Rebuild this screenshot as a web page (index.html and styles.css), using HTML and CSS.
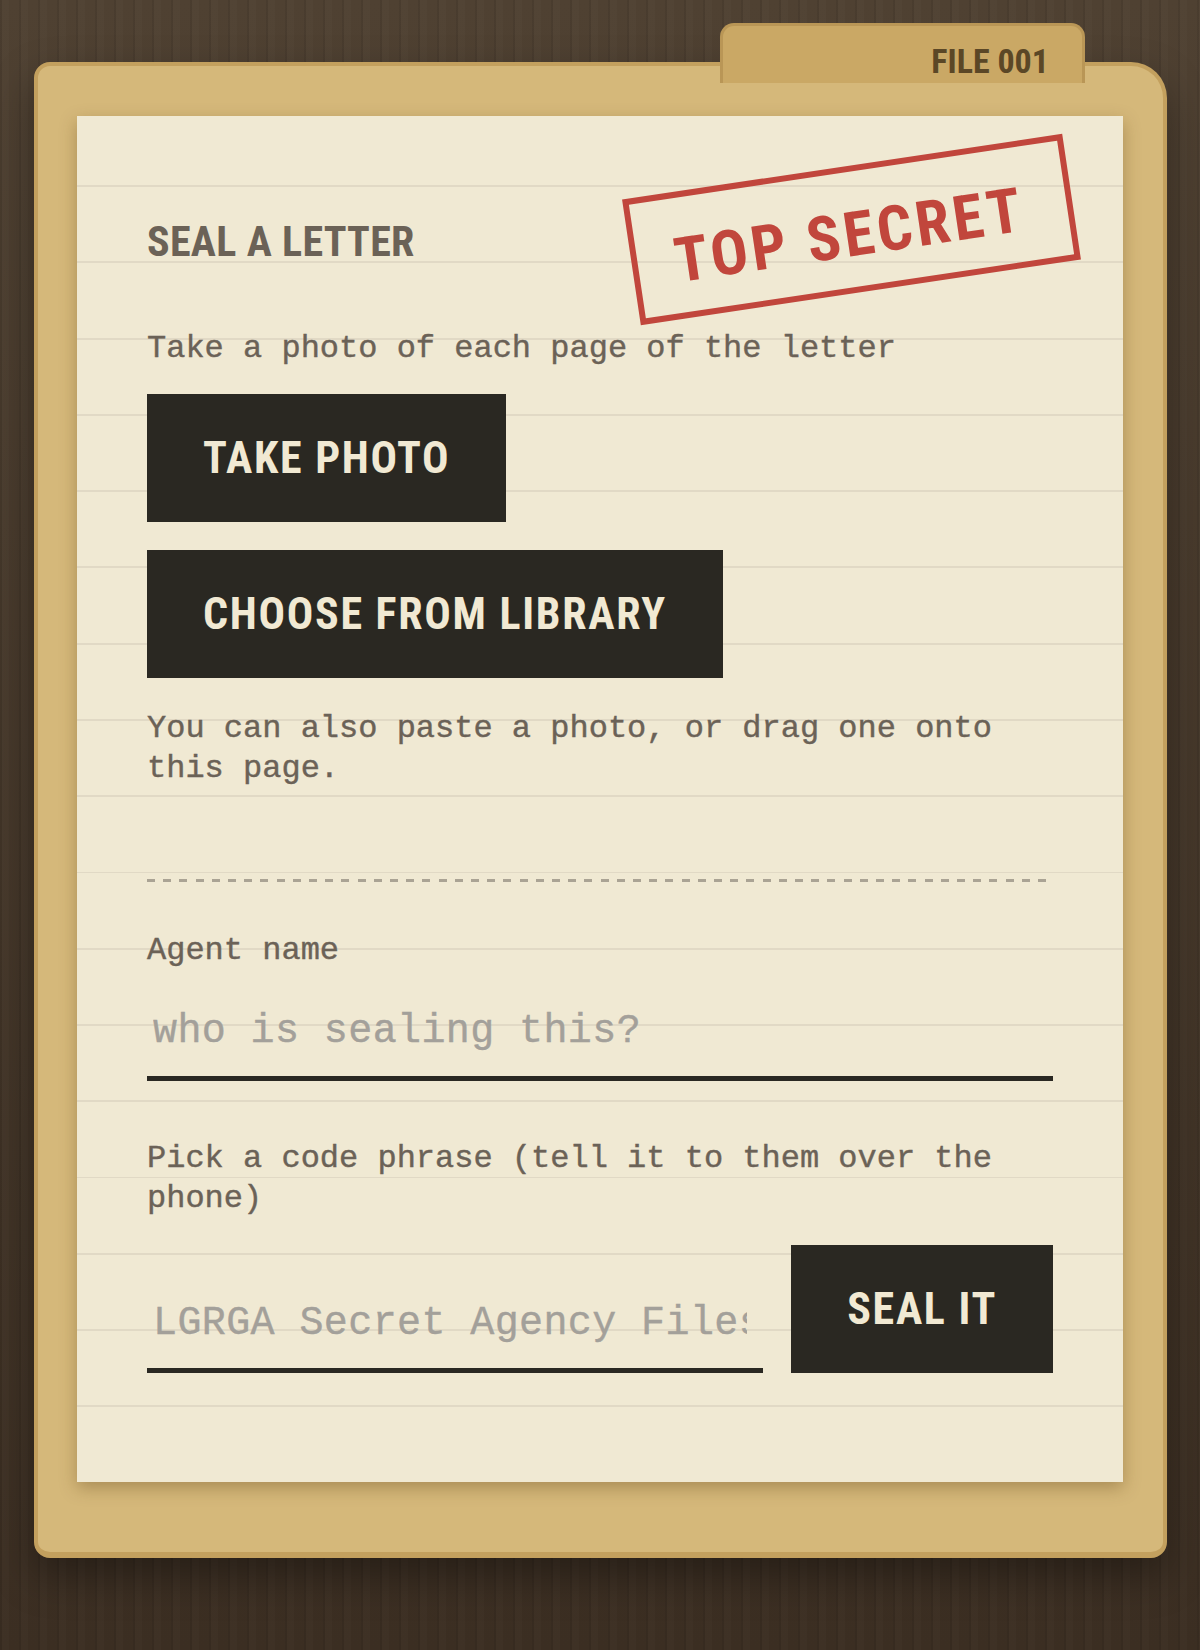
FILE: index.html
```html
<!DOCTYPE html>
<html lang="en">
<head>
    <meta charset="UTF-8">
    <meta name="viewport" content="width=device-width, initial-scale=1.0">
    <title>Seal a Letter</title>
    <link rel="stylesheet" href="styles.css">
</head>
<body>
    <div class="desk">
        <div class="folder">
            <div class="folder-tab">FILE 001</div>

            <main class="paper">
                <div class="stamp">TOP SECRET</div>

                <h1 class="paper-title">SEAL A LETTER</h1>
                <p class="note">Take a photo of each page of the letter</p>

                <div class="upload-actions">
                    <button class="btn" type="button">TAKE PHOTO</button>
                    <button class="btn" type="button">CHOOSE FROM LIBRARY</button>
                </div>

                <p class="note note-paste">You can also paste a photo, or drag one onto this page.</p>

                <hr class="divider">

                <label class="field-label" for="agent">Agent name</label>
                <input class="field" id="agent" type="text" placeholder="who is sealing this?">

                <label class="field-label field-label-phrase" for="phrase">Pick a code phrase (tell it to them over the phone)</label>
                <div class="seal-row">
                    <input class="field field-phrase" id="phrase" type="text" placeholder="LGRGA Secret Agency Files">
                    <button class="btn btn-seal" type="button">SEAL IT</button>
                </div>
            </main>
        </div>
    </div>
</body>
</html>
```

FILE: styles.css
```css
* {
    box-sizing: border-box;
}

body {
    margin: 0;
    min-height: 100vh;
    font-family: "Liberation Mono", "DejaVu Sans Mono", monospace;
    color: #6b6257;
    background:
        repeating-linear-gradient(90deg, rgba(0, 0, 0, 0.07) 0 2px, rgba(255, 255, 255, 0.015) 2px 9px, transparent 9px 19px),
        linear-gradient(#4f4132, #3b2e22);
}

.desk {
    padding: 62px 33px 92px 34px;
}

/* manila folder */
.folder {
    position: relative;
    background: #d5b87a;
    border: 4px solid #c3a05e;
    border-bottom-width: 6px;
    border-radius: 16px 36px 16px 16px;
    padding: 50px 40px 70px 39px;
    box-shadow: 0 18px 40px rgba(0, 0, 0, 0.35);
}

.folder-tab {
    position: absolute;
    top: -43px;
    left: 682px;
    width: 365px;
    height: 60px;
    padding: 17px 33px 0 0;
    background: #caa865;
    border: 3px solid #b99656;
    border-bottom: 0;
    border-radius: 14px 14px 0 0;
    text-align: right;
    color: #5b4726;
    font-family: "Roboto Condensed", "DejaVu Sans Condensed", sans-serif;
    font-weight: 700;
    font-size: 34px;
    line-height: 36px;
}

/* lined sheet */
.paper {
    position: relative;
    display: block;
    padding: 103px 70px 109px;
    background-color: #f0e9d3;
    background-image: repeating-linear-gradient(to bottom, transparent 0, transparent 74.25px, #e1d9c5 74.25px, #e1d9c5 76.25px);
    background-position: 0 -5px;
    box-shadow: 0 6px 16px rgba(90, 60, 20, 0.35);
}

.stamp {
    position: absolute;
    top: 50px;
    left: 552px;
    width: 445px;
    height: 127px;
    display: flex;
    align-items: center;
    justify-content: center;
    padding: 10px 6px 0 0;
    border: 6px solid #c1463c;
    color: #c1463c;
    font-family: "Roboto Condensed", "DejaVu Sans Condensed", sans-serif;
    font-weight: 700;
    font-size: 62px;
    line-height: 1;
    letter-spacing: 3.5px;
    white-space: nowrap;
    transform: rotate(-8.5deg);
    pointer-events: none;
}

.paper-title {
    margin: 0;
    font-family: "Roboto Condensed", "DejaVu Sans Condensed", sans-serif;
    font-weight: 700;
    font-size: 42px;
    line-height: 46px;
    letter-spacing: 0.3px;
    color: #6b6257;
}

/* typewritten lines get a little ink spread */
.note,
.field-label,
.field {
    -webkit-text-stroke: 0.4px currentColor;
}

.note {
    margin: 64px 0 0;
    font-size: 32px;
    line-height: 40px;
}

.note-paste {
    margin-top: 31px;
}

.upload-actions {
    display: flex;
    flex-direction: column;
    align-items: flex-start;
    gap: 28px;
    margin-top: 25px;
}

.btn {
    display: inline-flex;
    align-items: center;
    height: 128px;
    padding: 0 56px;
    border: 0;
    background: #2a2822;
    color: #f1e9d3;
    font-family: "Roboto Condensed", "DejaVu Sans Condensed", sans-serif;
    font-weight: 700;
    font-size: 44px;
    line-height: 1;
    letter-spacing: 1.7px;
    white-space: nowrap;
    cursor: pointer;
}

.divider {
    height: 3px;
    margin: 90px 0 0;
    border: 0;
    background: repeating-linear-gradient(90deg, #aaa394 0 8px, transparent 8px 16.2px);
}

.field-label {
    display: block;
    margin-top: 49px;
    font-size: 32px;
    line-height: 40px;
}

.field-label-phrase {
    margin-top: 58px;
}

.field {
    display: block;
    width: 100%;
    margin-top: 21px;
    padding: 16px 6px 20px;
    border: 0;
    border-bottom: 5px solid #2a2822;
    border-radius: 0;
    background: transparent;
    color: #3a352e;
    font-family: inherit;
    font-size: 40px;
    line-height: 48px;
    letter-spacing: 0.4px;
    outline: none;
}

.field::placeholder {
    color: #a3a09a;
}

.seal-row {
    display: flex;
    align-items: flex-end;
    gap: 28px;
    margin-top: 26px;
}

.seal-row .field {
    flex: 1;
    min-width: 0;
    margin-top: 0;
}

.field-phrase {
    padding-right: 16px;
}

.btn-seal {
    flex: none;
}
```
